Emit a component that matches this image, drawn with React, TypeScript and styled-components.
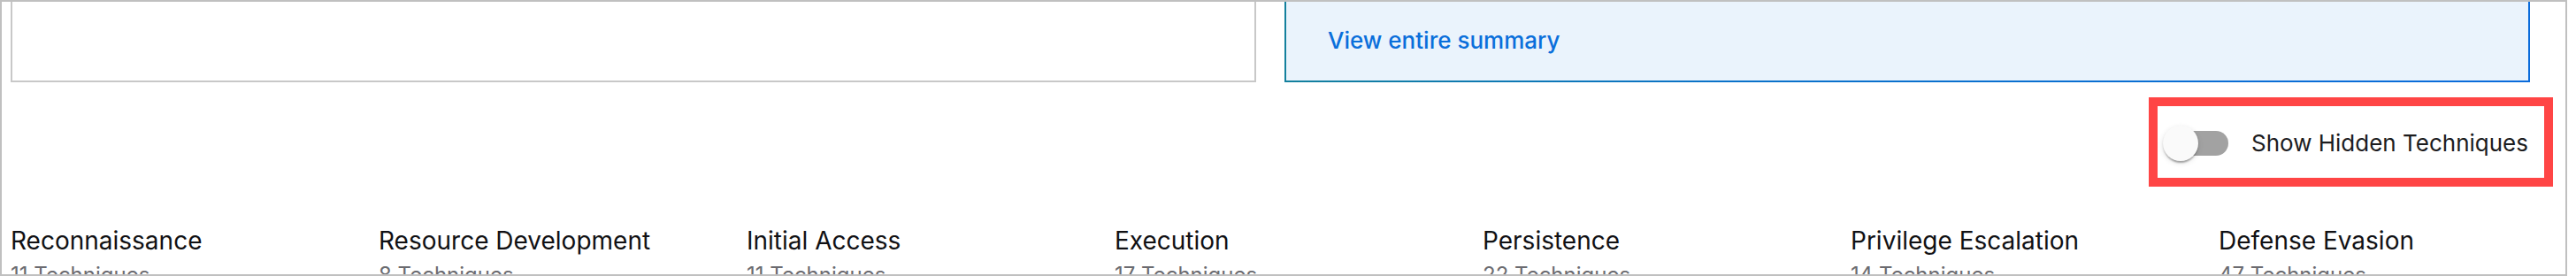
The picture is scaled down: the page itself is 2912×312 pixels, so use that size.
import React, { useState } from "react";
import styled, { createGlobalStyle } from "styled-components";

const GlobalStyle = createGlobalStyle`
  * {
    box-sizing: border-box;
  }
  body {
    margin: 0;
    background: #ffffff;
    font-family: Inter, "Noto Sans", "Liberation Sans", sans-serif;
  }
`;

const StyledFrame = styled.main`
  width: 2902px;
  height: 312px;
  border: 2px solid #c0c0c0;
  overflow: hidden;
  padding: 0 40px 0 10px;
`;

const StyledSummaryRow = styled.section`
  display: grid;
  grid-template-columns: 1fr 1fr;
  gap: 32px;
  margin-top: -48px;
`;

const StyledChartBox = styled.div`
  height: 139px;
  border: 2px solid #c8c8c8;
  background-color: #ffffff;
`;

const StyledSummaryBox = styled.div`
  height: 139px;
  display: flex;
  flex-direction: column;
  justify-content: flex-end;
  padding: 0 47px 25px;
  background-color: #eaf3fc;
  border: 2px solid;
  border-image: linear-gradient(to right, #13809d, #0a72c9 35%, #0a6bdb) 1;
`;

const StyledSummaryLink = styled.a`
  font-size: 26px;
  line-height: 40px;
  font-weight: 500;
  color: #0a6fdb;
  text-decoration: none;
  cursor: pointer;
`;

const StyledToggleRow = styled.div`
  display: flex;
  justify-content: flex-end;
  margin-top: 17px;
  margin-right: -26px;
`;

const StyledHighlight = styled.label`
  display: flex;
  align-items: center;
  height: 101px;
  padding: 3px 18px 0 6px;
  border: 10px solid #ff4545;
  cursor: pointer;
`;

const StyledSwitch = styled.span`
  position: relative;
  display: inline-block;
  width: 74px;
  height: 40px;
  flex-shrink: 0;
`;

const StyledTrack = styled.span<{ $on: boolean }>`
  position: absolute;
  left: 6px;
  top: 6px;
  width: 68px;
  height: 28px;
  border-radius: 14px;
  background-color: ${(p) => (p.$on ? "#90caf9" : "#a2a2a2")};
`;

const StyledKnob = styled.span<{ $on: boolean }>`
  position: absolute;
  top: 0;
  left: ${(p) => (p.$on ? "34px" : "0")};
  width: 40px;
  height: 40px;
  border-radius: 50%;
  background-color: ${(p) => (p.$on ? "#1976d2" : "#fafafa")};
  box-shadow: 0 4px 2px -2px rgba(0, 0, 0, 0.2), 0 2px 2px 0 rgba(0, 0, 0, 0.14),
    0 2px 6px 0 rgba(0, 0, 0, 0.12);
`;

const StyledToggleText = styled.span`
  margin-left: 26px;
  font-size: 26px;
  line-height: 40px;
  color: #1c1c1e;
`;

const StyledTactics = styled.section`
  display: flex;
  margin-top: 40px;
`;

const StyledTactic = styled.div`
  flex: 0 0 416px;
`;

const StyledTacticName = styled.h3`
  margin: 0;
  font-size: 28px;
  line-height: 42px;
  font-weight: 400;
  color: #111114;
`;

const StyledTacticCount = styled.p`
  margin: 0;
  font-size: 24px;
  line-height: 36px;
  color: #6b6b70;
`;

const tactics: { name: string; count: number }[] = [
  { name: "Reconnaissance", count: 11 },
  { name: "Resource Development", count: 8 },
  { name: "Initial Access", count: 11 },
  { name: "Execution", count: 17 },
  { name: "Persistence", count: 22 },
  { name: "Privilege Escalation", count: 14 },
  { name: "Defense Evasion", count: 47 },
];

const App = () => {
  const [showHidden, setShowHidden] = useState(false);

  return (
    <>
      <GlobalStyle />
      <StyledFrame>
        <StyledSummaryRow>
          <StyledChartBox />
          <StyledSummaryBox>
            <StyledSummaryLink>View entire summary</StyledSummaryLink>
          </StyledSummaryBox>
        </StyledSummaryRow>
        <StyledToggleRow>
          <StyledHighlight onClick={() => setShowHidden((prev) => !prev)}>
            <StyledSwitch>
              <StyledTrack $on={showHidden} />
              <StyledKnob $on={showHidden} />
            </StyledSwitch>
            <StyledToggleText>Show Hidden Techniques</StyledToggleText>
          </StyledHighlight>
        </StyledToggleRow>
        <StyledTactics>
          {tactics.map((t) => (
            <StyledTactic key={t.name}>
              <StyledTacticName>{t.name}</StyledTacticName>
              <StyledTacticCount>{t.count} Techniques</StyledTacticCount>
            </StyledTactic>
          ))}
        </StyledTactics>
      </StyledFrame>
    </>
  );
};

export default App;
